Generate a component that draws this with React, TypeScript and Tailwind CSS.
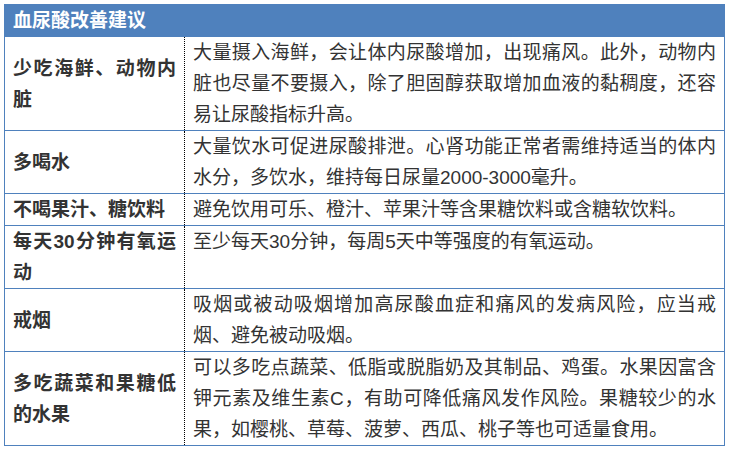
import React from "react";

const rows = [
  {
    key: "seafood",
    title: "少吃海鲜、动物内脏",
    text: "大量摄入海鲜，会让体内尿酸增加，出现痛风。此外，动物内脏也尽量不要摄入，除了胆固醇获取增加血液的黏稠度，还容易让尿酸指标升高。"
  },
  {
    key: "water",
    title: "多喝水",
    text: "大量饮水可促进尿酸排泄。心肾功能正常者需维持适当的体内水分，多饮水，维持每日尿量2000-3000毫升。"
  },
  {
    key: "juice",
    title: "不喝果汁、糖饮料",
    text: "避免饮用可乐、橙汁、苹果汁等含果糖饮料或含糖软饮料。"
  },
  {
    key: "sport",
    title: "每天30分钟有氧运动",
    text: "至少每天30分钟，每周5天中等强度的有氧运动。"
  },
  {
    key: "smoke",
    title: "戒烟",
    text: "吸烟或被动吸烟增加高尿酸血症和痛风的发病风险，应当戒烟、避免被动吸烟。"
  },
  {
    key: "veg",
    title: "多吃蔬菜和果糖低的水果",
    text: "可以多吃点蔬菜、低脂或脱脂奶及其制品、鸡蛋。水果因富含钾元素及维生素C，有助可降低痛风发作风险。果糖较少的水果，如樱桃、草莓、菠萝、西瓜、桃子等也可适量食用。"
  }
];

export default function App() {
  return (
    <div
      className="w-[730px] h-[450px] bg-white p-1 text-[19px] leading-[31px] text-[#333]"
      style={{ fontFamily: '"Liberation Sans", "Noto Sans CJK SC", sans-serif' }}
    >
      <div className="w-[721px] border border-[#4f81bd]">
        <div className="h-[31px] bg-[#4f81bd] pl-2 font-bold text-white leading-[31px]">
          血尿酸改善建议
        </div>

        {rows.map((r) => (
          <div key={r.key} className="flex border-t border-[#4f81bd]">
            <div className="w-[180px] shrink-0 flex items-center px-2 font-bold border-r border-dotted border-black">
              <p className="w-full text-justify">{r.title}</p>
            </div>
            <div className="flex-1 px-2">
              <p className="text-justify">{r.text}</p>
            </div>
          </div>
        ))}
      </div>
    </div>
  );
}
